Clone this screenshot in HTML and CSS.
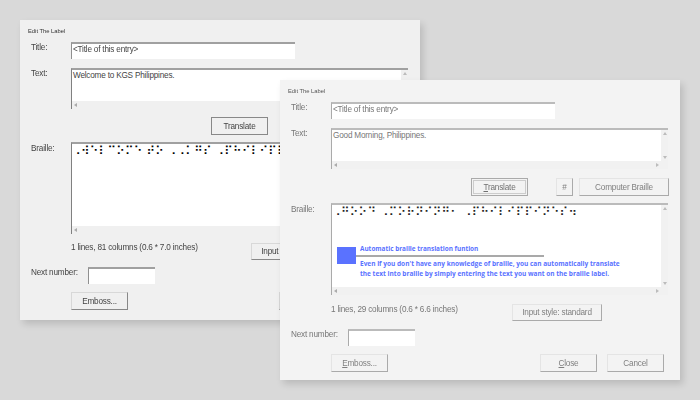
FILE: index.html
```html
<!DOCTYPE html>
<html lang="en">
<head>
<meta charset="utf-8">
<title>Edit The Label</title>
<link rel="stylesheet" href="styles.css">
</head>
<body>
<main class="desktop">
  <section class="win win-back">
    <header class="caption">Edit The Label</header>
    <div class="row row-title"><span class="label">Title:</span><div class="field field-title">&lt;Title of this entry&gt;</div></div>
    <div class="row row-text"><span class="label">Text:</span>
      <div class="box box-text">
        <div class="box-body">Welcome to KGS Philippines.</div>
        <i class="arrow arrow-left"></i><i class="arrow arrow-up"></i>
      </div>
    </div>
    <div class="row row-actions"><button class="btn btn-translate">Translate</button></div>
    <div class="row row-braille"><span class="label">Braille:</span>
      <div class="box box-braille">
        <div class="box-body braille">⠠⠺⠑⠇⠉⠕⠍⠑ ⠞⠕ ⠠⠠⠅⠛⠎ ⠠⠏⠓⠊⠇⠊⠏⠏⠊⠝⠑⠎⠲</div>
        <i class="arrow arrow-left"></i>
      </div>
    </div>
    <div class="row row-status"><span class="status">1 lines, 81 columns (0.6 * 7.0 inches)</span><button class="btn btn-style">Input style: standard</button></div>
    <div class="row row-next"><span class="label label-next">Next number:</span><div class="field field-next"></div></div>
    <div class="row row-bottom"><button class="btn btn-emboss">Emboss...</button><button class="btn btn-close">Close</button></div>
  </section>

  <section class="win win-front">
    <header class="caption">Edit The Label</header>
    <div class="row row-title"><span class="label">Title:</span><div class="field field-title">&lt;Title of this entry&gt;</div></div>
    <div class="row row-text"><span class="label">Text:</span>
      <div class="box box-text">
        <div class="box-body">Good Morning, Philippines.</div>
        <i class="arrow arrow-left"></i><i class="arrow arrow-right"></i><i class="arrow arrow-up"></i><i class="arrow arrow-down"></i>
      </div>
    </div>
    <div class="row row-actions">
      <button class="btn btn-translate btn-default"><u>T</u>ranslate</button>
      <button class="btn btn-hash">#</button>
      <button class="btn btn-computer">Computer Braille</button>
    </div>
    <div class="row row-braille"><span class="label">Braille:</span>
      <div class="box box-braille">
        <div class="box-body braille">⠠⠛⠕⠕⠙ ⠠⠍⠕⠗⠝⠊⠝⠛⠂ ⠠⠏⠓⠊⠇⠊⠏⠏⠊⠝⠑⠎⠲</div>
        <i class="arrow arrow-left"></i><i class="arrow arrow-right"></i><i class="arrow arrow-up"></i><i class="arrow arrow-down"></i>
        <aside class="note">
          <span class="note-rule"></span>
          <span class="note-square"></span>
          <h2 class="note-title">Automatic braille translation funtion</h2>
          <p class="note-text">Even if you don't have any knowledge of braille, you can automatically translate<br>the text into braille by simply entering the text you want on the braille label.</p>
        </aside>
      </div>
    </div>
    <div class="row row-status"><span class="status">1 lines, 29 columns (0.6 * 6.6 inches)</span><button class="btn btn-style">Input style: standard</button></div>
    <div class="row row-next"><span class="label label-next">Next number:</span><div class="field field-next"></div></div>
    <div class="row row-bottom"><button class="btn btn-emboss"><u>E</u>mboss...</button><button class="btn btn-close"><u>C</u>lose</button><button class="btn btn-cancel">Cancel</button></div>
  </section>
</main>
</body>
</html>
```

FILE: styles.css
```css
html, body { margin: 0; padding: 0; }
body { width: 700px; height: 400px; overflow: hidden; background: #d9d9d9; }
.desktop { position: relative; width: 700px; height: 400px; font-family: "Liberation Sans", Arial, sans-serif; font-size: 8.2px; letter-spacing: -.2px; color: #444; }

.win { position: absolute; width: 400px; height: 300px; box-sizing: border-box; padding: 6px 0 0 11px; background: #f0f0f0; box-shadow: 3px 4px 7px rgba(0,0,0,.14); filter: blur(.3px); overflow: hidden; display: flex; flex-direction: column; }
.win-back { left: 20px; top: 20px; }
.win-front { left: 280px; top: 80px; background: #f3f3f3; color: #777; }

.caption { position: relative; height: 11px; margin: 0 0 5px -3px; font-size: 5.8px; letter-spacing: 0; line-height: 11px; color: #333; }
.win-front .caption { color: #555; }

.row { display: flex; align-items: flex-start; }
.label { width: 40px; flex: none; line-height: 11px; }
.row-title { height: 17px; margin-bottom: 9px; }
.row-text { height: 41px; margin-bottom: 8px; }
.row-actions { height: 18px; margin-bottom: 7px; padding-left: 180px; }
.row-braille { height: 92px; margin-bottom: 9px; }
.row-braille .label { margin-top: 1px; }
.row-status { height: 17px; margin-bottom: 7px; padding-left: 40px; }
.row-next { height: 17px; margin-bottom: 8px; }
.row-bottom { height: 18px; padding-left: 40px; }
.win-front .row-actions { margin-top: 1px; }
.win-front .row-status { margin-bottom: 8px; }

.label-next { width: 57px; }

.field { box-sizing: border-box; height: 17px; background: #fff; border-top: 2px solid #a0a0a0; border-left: 1px solid #909090; padding-left: 1px; line-height: 12px; color: #444; }
.win-front .field { border-top-color: #bbb; border-left-color: #aaa; color: #777; }
.field-title { width: 224px; }
.field-next { width: 67px; }

.box { position: relative; box-sizing: border-box; width: 337px; background: #f0f0f0; border-top: 2px solid #a0a0a0; border-left: 1px solid #808080; }
.win-front .box { border-top-color: #bbb; border-left-color: #aaa; background: #f1f1f1; }
.box-text { height: 41px; }
.box-braille { height: 92px; }
.box-body { background: #fff; margin-right: 7px; height: 31px; padding-left: 1px; line-height: 11px; color: #444; }
.win-front .box-body { color: #777; }
.box-braille .box-body { height: 82px; }
.box-body.braille { font-family: "DejaVu Sans", sans-serif; font-size: 12px; letter-spacing: 0; line-height: 15px; padding-left: 0; white-space: nowrap; color: #000; }
.win-front .box-body.braille { color: #222; }

.arrow { position: absolute; width: 0; height: 0; border: 2.5px solid transparent; opacity: .5; }
.arrow-left { left: 2px; bottom: 2px; border-right: 3px solid #666; border-left: 0; }
.arrow-right { right: 9px; bottom: 2px; border-left: 3px solid #888; border-right: 0; }
.arrow-up { right: 1px; top: 2px; border-bottom: 3px solid #888; border-top: 0; }
.arrow-down { right: 1px; bottom: 10px; border-top: 3px solid #888; border-bottom: 0; }

.btn { box-sizing: border-box; height: 18px; margin: 0; padding: 0; font: inherit; letter-spacing: inherit; color: #444; background: #f0f0f0; border: 1px solid #d8d8d8; border-right: 1px solid #888; border-bottom: 1px solid #888; border-radius: 0; line-height: 15px; text-align: center; }
.win-front .btn { background: #f3f3f3; color: #808080; border-color: #e4e4e4 #aaa #aaa #e4e4e4; }
.btn-translate { width: 57px; border: 1px solid #888; }
.win-front .btn-default { border: 1px solid #aaa; outline: 1px solid #ccc; outline-offset: -3px; color: #707070; }
.btn-hash { width: 17px; margin-left: 28px; }
.btn-computer { width: 90px; margin-left: 6px; }
.status { width: 180px; flex: none; line-height: 11px; margin-top: -1px; }
.win-front .status { margin-top: 0; }
.btn-style { width: 90px; height: 17px; }
.win-front .btn-style { margin-left: 1px; }
.btn-emboss { width: 57px; }
.btn-close { width: 57px; margin-left: 151px; }
.btn-cancel { width: 57px; margin-left: 10px; }
.win-front .btn-close { margin-left: 152px; }

.note { position: absolute; left: 4px; top: 42px; width: 300px; height: 36px; font-family: "Open Sans", sans-serif; letter-spacing: 0; color: #5a72ff; }
.note-rule { position: absolute; left: 1px; top: 8px; width: 207px; height: 2px; background: #a9a9a9; }
.note-square { position: absolute; left: 1px; top: 0; width: 19px; height: 17px; background: #5a72ff; }
.note-title { position: absolute; left: 24px; top: -3px; margin: 0; font-size: 6.4px; line-height: 10px; font-weight: 700; white-space: nowrap; }
.note-text { position: absolute; left: 24px; top: 12px; margin: 0; font-size: 6.5px; line-height: 9.5px; font-weight: 700; white-space: nowrap; }
```
